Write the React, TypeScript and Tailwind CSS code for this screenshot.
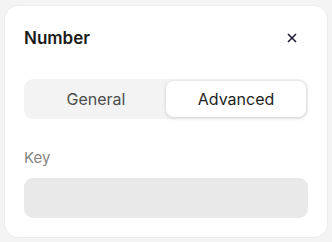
import { useState } from 'react';

const TABS = ['General', 'Advanced'];

export default function App() {
  const [tab, setTab] = useState('Advanced');

  return (
    <div
      className="min-h-screen w-[332px] h-[242px] bg-[#f4f4f4] pt-[5px] px-[4px] pb-[4px]"
      style={{ fontFamily: 'Inter, "Noto Sans", sans-serif' }}
    >
      <div className="bg-white rounded-[14px] border border-[#ececec] px-[19px] py-[19px]">
        <div className="flex items-center justify-between h-[26px]">
          <h2 className="text-[17px] font-semibold text-[#1a1a1a] leading-[26px]">Number</h2>
          <button className="w-[20px] h-[20px] flex items-center justify-center mr-[6px] text-[#1c1b33]">
            <svg width="10" height="10" viewBox="0 0 10 10" fill="none" stroke="currentColor" strokeWidth="1.5" strokeLinecap="square">
              <path d="M1.5 1.5l7 7M8.5 1.5l-7 7" />
            </svg>
          </button>
        </div>

        <div className="mt-[28px] h-[40px] bg-[#f3f3f3] rounded-[9px] p-[2px] grid grid-cols-2">
          {TABS.map(t => (
            <button
              key={t}
              onClick={() => setTab(t)}
              className={
                t === tab
                  ? 'rounded-[8px] bg-white text-[#1f1f1f] text-[16px] shadow-[0_1px_4px_rgba(0,0,0,0.14)]'
                  : 'rounded-[8px] text-[#4d4d4d] text-[16px]'
              }
            >
              {t}
            </button>
          ))}
        </div>

        <p className="mt-[29px] text-[15px] leading-[20px] text-[#858585]">Key</p>
        <div className="mt-[10px] h-[40px] rounded-[9px] bg-[#e9e9e9]" />
      </div>
    </div>
  );
}
